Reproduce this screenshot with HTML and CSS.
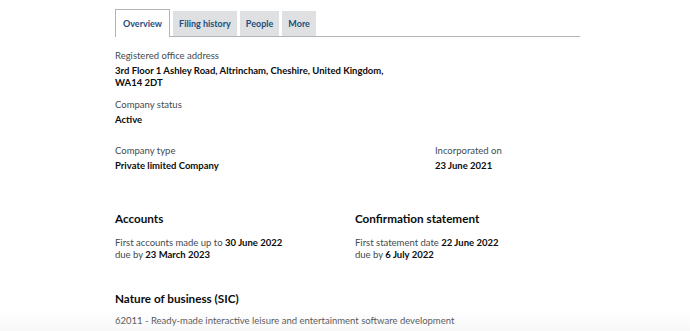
FILE: index.html
```html
<!DOCTYPE html>
<html lang="en">
<head>
    <meta charset="UTF-8">
    <title>Company overview</title>
    <link rel="stylesheet" href="styles.css">
</head>
<body>
    <div class="page">
        <nav class="tabs">
            <a class="tab active" href="#">Overview</a>
            <a class="tab" href="#">Filing history</a>
            <a class="tab" href="#">People</a>
            <a class="tab" href="#">More</a>
        </nav>

        <dl class="field">
            <dt>Registered office address</dt>
            <dd class="address">3rd Floor 1 Ashley Road, Altrincham, Cheshire, United Kingdom, WA14 2DT</dd>
        </dl>

        <dl class="field">
            <dt>Company status</dt>
            <dd>Active</dd>
        </dl>

        <div class="row type-row">
            <dl class="field">
                <dt>Company type</dt>
                <dd>Private limited Company</dd>
            </dl>
            <dl class="field">
                <dt>Incorporated on</dt>
                <dd>23 June 2021</dd>
            </dl>
        </div>

        <div class="row dates-row">
            <section>
                <h2>Accounts</h2>
                <p>First accounts made up to <strong>30 June 2022</strong><br>due by <strong>23 March 2023</strong></p>
            </section>
            <section>
                <h2>Confirmation statement</h2>
                <p>First statement date <strong>22 June 2022</strong><br>due by <strong>6 July 2022</strong></p>
            </section>
        </div>

        <section class="sic">
            <h2>Nature of business (SIC)</h2>
            <p>62011 - Ready-made interactive leisure and entertainment software development</p>
        </section>
    </div>
    <div class="fade"></div>
</body>
</html>
```

FILE: styles.css
```css
body {
    margin: 0;
    background: #fff;
    font-family: 'Lato', 'Liberation Sans', sans-serif;
    color: #0b0c0c;
    font-size: 9.5px;
}

.page {
    width: 465px;
    margin-left: 115px;
    padding-top: 9px;
}

.tabs {
    display: flex;
    gap: 3px;
    border-bottom: 1px solid #b1b4b6;
    height: 27px;
}

.tab {
    display: flex;
    align-items: center;
    padding: 0 6px;
    margin-top: 2px;
    background: #dee0e2;
    color: #1d4d7d;
    font-weight: 700;
    font-size: 9px;
    text-decoration: none;
}

.tab.active {
    margin-top: 0;
    background: #fff;
    border: 1px solid #b1b4b6;
    border-bottom: 0;
    margin-bottom: -1px;
    padding: 0 7px;
}

dl {
    margin: 0;
}

.field dt {
    color: #454a4d;
    line-height: 12px;
}

.field dd {
    margin: 3px 0 0;
    font-weight: 700;
    line-height: 12px;
}

.address {
    width: 280px;
}

.tabs + .field {
    margin-top: 13px;
}

.field + .field {
    margin-top: 10px;
}

.row {
    display: flex;
}

.row .field {
    margin-top: 0;
}

.type-row {
    margin-top: 19px;
}

.type-row .field:first-child {
    width: 320px;
}

.dates-row {
    margin-top: 38px;
}

.dates-row section:first-child {
    width: 240px;
}

h2 {
    margin: 0;
    font-size: 11.7px;
    font-weight: 700;
    line-height: 16px;
}

p {
    margin: 11px 0 0;
    color: #454a4d;
    line-height: 12px;
}

p strong {
    color: #0b0c0c;
}

.sic {
    margin-top: 29px;
}

.sic p {
    margin-top: 9px;
    color: #2f3336;
}

.fade {
    position: fixed;
    left: 0;
    right: 0;
    bottom: 0;
    height: 22px;
    background: linear-gradient(to bottom, rgba(238, 238, 238, 0), rgba(238, 238, 238, 0.4));
    pointer-events: none;
}
```
